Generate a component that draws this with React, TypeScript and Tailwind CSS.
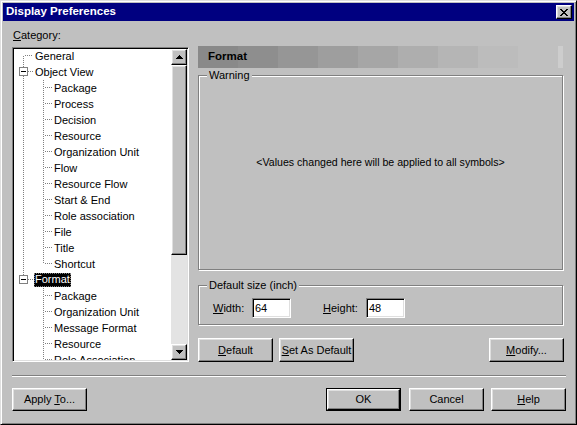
import React from "react";

type Row = {
  label: string;
  level: 0 | 1;
  v0: "full" | "top" | "bottom" | "none";
  v1?: "full" | "top";
  box?: boolean;
  selected?: boolean;
};

const objectChildren = [
  "Package",
  "Process",
  "Decision",
  "Resource",
  "Organization Unit",
  "Flow",
  "Resource Flow",
  "Start & End",
  "Role association",
  "File",
  "Title",
];

const formatChildren = [
  "Package",
  "Organization Unit",
  "Message Format",
  "Resource",
  "Role Association",
];

const rows: Row[] = [
  { label: "General", level: 0, v0: "bottom" },
  { label: "Object View", level: 0, v0: "full", box: true },
  ...objectChildren.map((label) => ({ label, level: 1 as const, v0: "full" as const, v1: "full" as const })),
  { label: "Shortcut", level: 1, v0: "full", v1: "top" },
  { label: "Format", level: 0, v0: "top", box: true, selected: true },
  ...formatChildren.map((label) => ({ label, level: 1 as const, v0: "none" as const, v1: "full" as const })),
];

const dot = { stroke: "#808080", strokeWidth: 1, strokeDasharray: "1 1", shapeRendering: "crispEdges" as const };

// tree connector lines for one row
const Connector = ({ row }: { row: Row }) => {
  const w = row.level === 0 ? 19 : 38;
  const boxTop = row.box ? 3 : 7;
  const boxBottom = row.box ? 12 : 8;
  return (
    <svg width={w} height={16} className="shrink-0">
      {(row.v0 === "full" || row.v0 === "top") && <line x1={9.5} y1={0} x2={9.5} y2={boxTop} {...dot} />}
      {(row.v0 === "full" || row.v0 === "bottom") && <line x1={9.5} y1={boxBottom} x2={9.5} y2={16} {...dot} />}
      {row.v1 === "full" && <line x1={29.5} y1={0} x2={29.5} y2={16} {...dot} />}
      {row.v1 === "top" && <line x1={29.5} y1={0} x2={29.5} y2={8} {...dot} />}
      {row.level === 0 ? (
        <line x1={row.box ? 14 : 11} y1={7.5} x2={19} y2={7.5} {...dot} />
      ) : (
        <line x1={31} y1={7.5} x2={38} y2={7.5} {...dot} />
      )}
      {row.box && (
        <>
          <rect x={5.5} y={3.5} width={8} height={8} fill="#fff" stroke="#808080" shapeRendering="crispEdges" />
          <line x1={7} y1={7.5} x2={12} y2={7.5} stroke="#000" shapeRendering="crispEdges" />
        </>
      )}
    </svg>
  );
};

const raised =
  "border border-t-white border-l-white border-r-black border-b-black shadow-[inset_-1px_-1px_0_#808080,inset_1px_1px_0_#dfdfdf] bg-[#c0c0c0]";
const sunken =
  "border border-t-[#808080] border-l-[#808080] border-r-white border-b-white shadow-[inset_1px_1px_0_#000,inset_-1px_-1px_0_#dfdfdf]";
const etched = "border border-[#808080] shadow-[1px_1px_0_#fff,inset_1px_1px_0_#fff]";

const Button = ({ children, className = "" }: { children: React.ReactNode; className?: string }) => (
  <button type="button" className={`${raised} h-[23px] w-[75px] flex items-center justify-center text-[11px] leading-none ${className}`}>
    <span>{children}</span>
  </button>
);

const Arrow = ({ down }: { down?: boolean }) => (
  <svg width={7} height={4} className={down ? "rotate-180" : ""}>
    <path d="M3 0h1v1h-1z M2 1h3v1h-3z M1 2h5v1h-5z M0 3h7v1h-7z" fill="#000" />
  </svg>
);

export default function App() {
  return (
    <div className="w-[577px] h-[425px] bg-[#c0c0c0] border border-t-[#dfdfdf] border-l-[#dfdfdf] border-r-black border-b-black shadow-[inset_1px_1px_0_#fff,inset_-1px_-1px_0_#808080] p-[2px] font-['Liberation_Sans',Arial,sans-serif] text-[11px] text-black flex flex-col overflow-hidden">
      {/* title bar */}
      <div className="h-[18px] bg-[#000080] flex items-center justify-between pl-[3px] pr-[2px]">
        <span className="text-white font-bold text-[11.5px] leading-none">Display Preferences</span>
        <div className={`${raised} w-[16px] h-[14px] flex items-center justify-center`}>
          <svg width={8} height={7}>
            <path
              d="M0 0h2v1h-2z M6 0h2v1h-2z M1 1h2v1h-2z M5 1h2v1h-2z M2 2h4v1h-4z M3 3h2v1h-2z M2 4h4v1h-4z M1 5h2v1h-2z M5 5h2v1h-2z M0 6h2v1h-2z M6 6h2v1h-2z"
              fill="#000"
            />
          </svg>
        </div>
      </div>

      <div className="flex-1 flex flex-col pl-[9px] pr-[8px]">
        <div className="flex">
          {/* category tree */}
          <div className="w-[177px] flex flex-col">
            <div className="mt-[8px] mb-[5px] h-[13px] leading-[13px] pl-[1px]">
              <u>C</u>ategory:
            </div>
            <div className={`${sunken} h-[315px] bg-white flex overflow-hidden p-[1px]`}>
              <div className="flex-1 overflow-hidden -mt-px">
                {rows.map((row, i) => (
                  <div key={i} className="h-[16px] flex items-center whitespace-nowrap">
                    <Connector row={row} />
                    <span
                      className={
                        row.selected
                          ? "bg-black text-white px-[1px] h-[14px] leading-[12px] outline outline-1 outline-dotted outline-[#808080] -outline-offset-1 ml-[1px]"
                          : "px-[2px] leading-[14px]"
                      }
                    >
                      {row.label}
                    </span>
                  </div>
                ))}
              </div>
              {/* scrollbar */}
              <div className="w-[16px] flex flex-col">
                <div className={`${raised} h-[16px] flex items-center justify-center`}>
                  <Arrow />
                </div>
                <div className={`${raised} h-[190px]`} />
                <div className="flex-1 bg-[#e3e3e3]" />
                <div className={`${raised} h-[16px] flex items-center justify-center`}>
                  <Arrow down />
                </div>
              </div>
            </div>
          </div>

          {/* right panel */}
          <div className="ml-[9px] w-[366px] pt-[25px] flex flex-col">
            <div className="flex justify-between">
              <div className="w-[320px] h-[22px] flex items-center pl-[10px] font-bold text-[11.5px] bg-[linear-gradient(to_right,#898989_0px_40px,#8e8e8e_40px_80px,#969696_80px_120px,#9e9e9e_120px_160px,#a6a6a6_160px_200px,#aeaeae_200px_240px,#b5b5b5_240px_280px,#bcbcbc_280px_320px)]">
                Format
              </div>
              <div className="w-[5px] h-[22px] bg-[#cdcdcd] mr-[1px]" />
            </div>

            <div className={`${etched} mt-[7px] h-[195px] w-[365px] flex flex-col`}>
              <span className="-mt-[7px] ml-[8px] px-[2px] h-[13px] leading-[13px] bg-[#c0c0c0] self-start">Warning</span>
              <div className="flex-1 flex items-center justify-center pb-[25px] text-[10.6px]">
                &lt;Values changed here will be applied to all symbols&gt;
              </div>
            </div>

            <div className={`${etched} mt-[15px] h-[40px] w-[365px] flex flex-col`}>
              <span className="-mt-[7px] ml-[8px] px-[2px] h-[13px] leading-[13px] bg-[#c0c0c0] self-start">
                Default size (inch)
              </span>
              <div className="mt-[6px] h-[20px] flex items-center pl-[14px]">
                <span className="w-[39px]">
                  <u>W</u>idth:
                </span>
                <div className={`${sunken} w-[39px] h-[20px] bg-white flex items-center pl-[2px]`}>64</div>
                <span className="ml-[32px] w-[43px]">
                  <u>H</u>eight:
                </span>
                <div className={`${sunken} w-[39px] h-[20px] bg-white flex items-center pl-[2px]`}>48</div>
              </div>
            </div>

            <div className="mt-[13px] flex">
              <Button className="h-[24px]">
                <u>D</u>efault
              </Button>
              <Button className="ml-[6px] h-[24px]">
                <u>S</u>et As Default
              </Button>
              <Button className="ml-auto h-[24px]">
                <u>M</u>odify...
              </Button>
            </div>
          </div>
        </div>

        <div className="mt-[13px] h-[2px] border-t border-t-[#808080] border-b border-b-white" />

        <div className="mt-[11px] flex">
          <Button>
            Apply <u>T</u>o...
          </Button>
          <div className="ml-auto border border-black w-[75px] h-[23px] flex">
            <button type="button" className={`${raised} flex-1 flex items-center justify-center leading-none`}>
              OK
            </button>
          </div>
          <Button className="ml-[8px]">Cancel</Button>
          <Button className="ml-[7px]">
            <u>H</u>elp
          </Button>
        </div>
      </div>
    </div>
  );
}
